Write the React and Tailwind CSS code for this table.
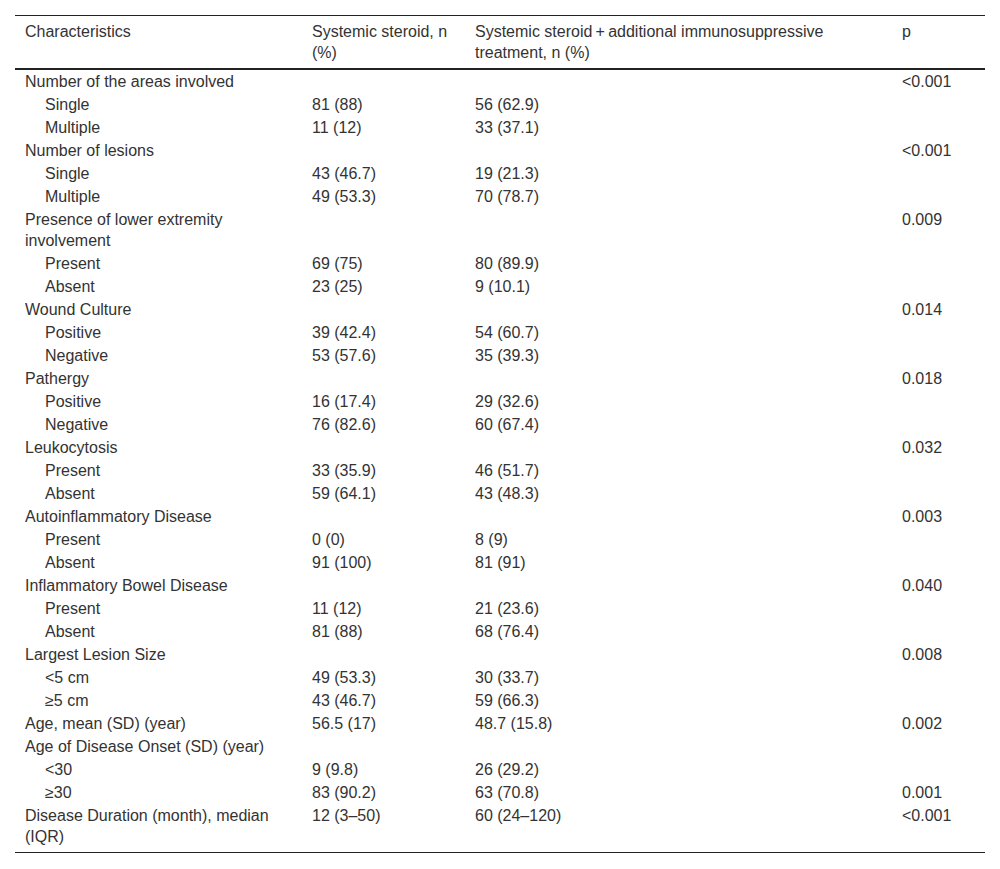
import React from "react";

const rows = [
  ["Number of the areas involved", "", "", "<0.001", false],
  ["Single", "81 (88)", "56 (62.9)", "", true],
  ["Multiple", "11 (12)", "33 (37.1)", "", true],
  ["Number of lesions", "", "", "<0.001", false],
  ["Single", "43 (46.7)", "19 (21.3)", "", true],
  ["Multiple", "49 (53.3)", "70 (78.7)", "", true],
  ["Presence of lower extremity involvement", "", "", "0.009", false],
  ["Present", "69 (75)", "80 (89.9)", "", true],
  ["Absent", "23 (25)", "9 (10.1)", "", true],
  ["Wound Culture", "", "", "0.014", false],
  ["Positive", "39 (42.4)", "54 (60.7)", "", true],
  ["Negative", "53 (57.6)", "35 (39.3)", "", true],
  ["Pathergy", "", "", "0.018", false],
  ["Positive", "16 (17.4)", "29 (32.6)", "", true],
  ["Negative", "76 (82.6)", "60 (67.4)", "", true],
  ["Leukocytosis", "", "", "0.032", false],
  ["Present", "33 (35.9)", "46 (51.7)", "", true],
  ["Absent", "59 (64.1)", "43 (48.3)", "", true],
  ["Autoinflammatory Disease", "", "", "0.003", false],
  ["Present", "0 (0)", "8 (9)", "", true],
  ["Absent", "91 (100)", "81 (91)", "", true],
  ["Inflammatory Bowel Disease", "", "", "0.040", false],
  ["Present", "11 (12)", "21 (23.6)", "", true],
  ["Absent", "81 (88)", "68 (76.4)", "", true],
  ["Largest Lesion Size", "", "", "0.008", false],
  ["<5 cm", "49 (53.3)", "30 (33.7)", "", true],
  ["\u22655 cm", "43 (46.7)", "59 (66.3)", "", true],
  ["Age, mean (SD) (year)", "56.5 (17)", "48.7 (15.8)", "0.002", false],
  ["Age of Disease Onset (SD) (year)", "", "", "", false],
  ["<30", "9 (9.8)", "26 (29.2)", "", true],
  ["\u226530", "83 (90.2)", "63 (70.8)", "0.001", true],
  ["Disease Duration (month), median (IQR)", "12 (3\u201350)", "60 (24\u2013120)", "<0.001", false],
];

export default function App() {
  return (
    <div className="bg-white w-[1000px] h-[869px] pt-[15px] px-[15px] text-[#333] text-[16px] leading-[21px]" style={{ fontFamily: '"Liberation Sans", Arial, sans-serif' }}>
      <table className="table-fixed w-[970px] border-collapse">
        <colgroup>
          <col className="w-[287px]" />
          <col className="w-[163px]" />
          <col className="w-[427px]" />
          <col className="w-[93px]" />
        </colgroup>
        <thead>
          <tr className="border-t border-[#222] border-b-2 border-b-[#222]">
            <th className="text-left font-normal align-top pl-[10px] pr-[10px] pt-[5px] pb-[5px]">Characteristics</th>
            <th className="text-left font-normal align-top pl-[10px] pr-[10px] pt-[5px] pb-[5px]">Systemic steroid, n (%)</th>
            <th className="text-left font-normal align-top pl-[10px] pr-[10px] pt-[5px] pb-[5px]">Systemic steroid{"\u2009+\u2009"}additional immunosuppressive treatment, n (%)</th>
            <th className="text-left font-normal align-top pl-[10px] pr-[10px] pt-[5px] pb-[5px]">p</th>
          </tr>
        </thead>
        <tbody className="border-b border-[#222]">
          {rows.map((r, i) => {
            const last = i === rows.length - 1;
            const pad = last ? "pt-[1px] pb-[5px]" : "py-[1px]";
            return (
              <tr key={i}>
                <td className={`align-top pr-[10px] ${pad} ${r[4] ? "pl-[30px]" : "pl-[10px]"}`}>{r[0]}</td>
                <td className={`align-top px-[10px] ${pad}`}>{r[1]}</td>
                <td className={`align-top px-[10px] ${pad}`}>{r[2]}</td>
                <td className={`align-top px-[10px] ${pad}`}>{r[3]}</td>
              </tr>
            );
          })}
        </tbody>
      </table>
    </div>
  );
}
